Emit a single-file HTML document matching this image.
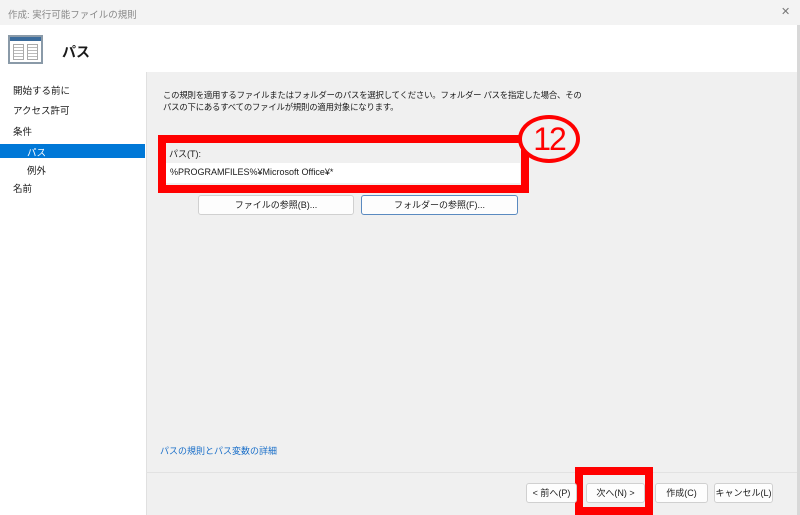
<!DOCTYPE html>
<html><head><meta charset="utf-8"><style>
*{margin:0;padding:0;box-sizing:border-box}
body{width:800px;height:515px;overflow:hidden;background:#fff;font-family:"Liberation Sans","Noto Sans CJK JP",sans-serif;font-size:9.5px;color:#1a1a1a;position:relative}
.a{position:absolute}
.btn{position:absolute;background:#fdfdfd;border:1px solid #d0d0d0;border-radius:3px;text-align:center;font-size:9px;line-height:18px}
</style></head><body>
<div class="a" style="left:0;top:0;width:800px;height:25px;background:#f3f3f3"></div>
<div class="a" style="left:8px;top:7px;font-size:9.5px;color:#888">作成: 実行可能ファイルの規則</div>
<div class="a" style="left:781px;top:5px;font-size:11px;color:#777">✕</div>
<div class="a" style="left:8px;top:35px;width:35px;height:29px;border:2px solid #8a9aa8;background:#fff">
 <div class="a" style="left:0;top:0;width:31px;height:4px;background:#3c6c9c"></div>
 <div class="a" style="left:3px;top:7px;width:11px;height:16px;border:1px solid #aaa;background:repeating-linear-gradient(#fff 0 2px,#bbb 2px 3px)"></div>
 <div class="a" style="left:17px;top:7px;width:11px;height:16px;border:1px solid #aaa;background:repeating-linear-gradient(#fff 0 2px,#bbb 2px 3px)"></div>
</div>
<div class="a" style="left:62px;top:42px;font-size:14px;font-weight:bold">パス</div>
<div class="a" style="left:146px;top:72px;width:651px;height:443px;background:#f0f0f0;border-left:1px solid #e0e0e0"></div>
<div class="a" style="left:146px;top:472px;width:651px;height:1px;background:#e2e2e2"></div>
<div class="a" style="left:797px;top:25px;width:3px;height:490px;background:#d8d8d8"></div>
<div class="a" style="left:13px;top:83px">開始する前に</div>
<div class="a" style="left:13px;top:103px">アクセス許可</div>
<div class="a" style="left:13px;top:124px">条件</div>
<div class="a" style="left:0;top:144px;width:145px;height:14px;background:#0078d7"></div>
<div class="a" style="left:27px;top:145px;color:#fff">パス</div>
<div class="a" style="left:27px;top:163px">例外</div>
<div class="a" style="left:13px;top:181px">名前</div>
<div class="a" style="left:163px;top:89px;font-size:8.4px;line-height:12px;white-space:nowrap;letter-spacing:-0.2px">この規則を適用するファイルまたはフォルダーのパスを選択してください。フォルダー パスを指定した場合、その<br>パスの下にあるすべてのファイルが規則の適用対象になります。</div>
<div class="a" style="left:158px;top:135px;width:371px;height:58px;border:8px solid #f00"></div>
<div class="a" style="left:169px;top:147px;font-size:9px">パス(T):</div>
<div class="a" style="left:166px;top:163px;width:354px;height:20px;background:#fff"></div>
<div class="a" style="left:170px;top:167px;font-size:9px">%PROGRAMFILES%¥Microsoft Office¥*</div>
<div class="a" style="left:518px;top:115px;width:62px;height:48px;background:#f0f0f0;border:4px solid #f00;border-radius:50%;color:#f00;font-size:32px;line-height:40px;text-align:center;letter-spacing:-2px">12</div>
<div class="btn" style="left:198px;top:195px;width:156px;height:20px">ファイルの参照(B)...</div>
<div class="btn" style="left:361px;top:195px;width:157px;height:20px;border-color:#5a8ac0">フォルダーの参照(F)...</div>
<div class="a" style="left:160px;top:444px;color:#1a6fc9;font-size:9px">パスの規則とパス変数の詳細</div>
<div class="a" style="left:575px;top:467px;width:78px;height:48px;border:8px solid #f00"></div>
<div class="btn" style="left:526px;top:483px;width:51px;height:20px">&lt; 前へ(P)</div>
<div class="btn" style="left:586px;top:483px;width:59px;height:20px">次へ(N) &gt;</div>
<div class="btn" style="left:655px;top:483px;width:53px;height:20px">作成(C)</div>
<div class="btn" style="left:714px;top:483px;width:59px;height:20px">キャンセル(L)</div>
</body></html>
